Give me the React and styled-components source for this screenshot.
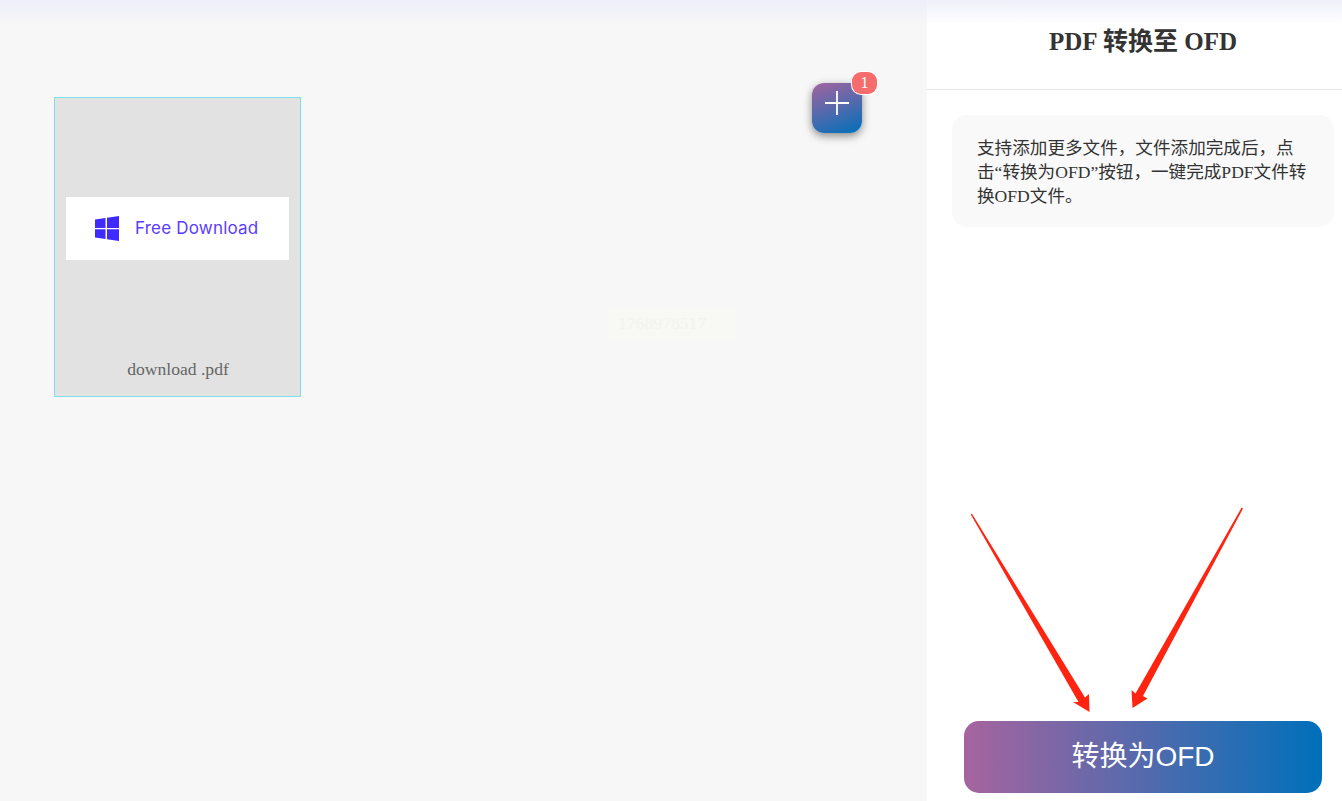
import React from 'react';
import styled, { createGlobalStyle } from 'styled-components';

const Global = createGlobalStyle`
  html, body { margin: 0; padding: 0; height: 100%; }
  body { font-family: "Liberation Serif", "Noto Sans CJK SC", serif; overflow: hidden; }
  #root { height: 100%; }
`;

const Page = styled.div`
  position: relative;
  display: flex;
  width: 1342px;
  height: 801px;
  overflow: hidden;
  background: #fff;
`;

const TopGlow = styled.div`
  position: absolute;
  inset: 0 0 auto 0;
  height: 24px;
  background: linear-gradient(180deg, rgba(236, 236, 250, 0.85), rgba(245, 245, 252, 0));
  pointer-events: none;
`;

const Workspace = styled.main`
  position: relative;
  flex: 0 0 927px;
  box-sizing: border-box;
  padding: 97px 0 0 54px;
  background: #f7f7f7;
`;

const FileCard = styled.div`
  box-sizing: border-box;
  width: 247px;
  height: 300px;
  border: 1px solid #7ddfe9;
  background: #e2e2e2;
  display: flex;
  flex-direction: column;
  align-items: center;
  padding: 99px 11px 0;
`;

const Thumb = styled.div`
  width: 223px;
  height: 63px;
  flex: none;
  box-sizing: border-box;
  background: #fff;
  display: flex;
  align-items: center;
  gap: 16px;
  padding: 0 0 1px 29px;
`;

const ThumbLabel = styled.span`
  font-family: "Inter", "Liberation Sans", sans-serif;
  font-size: 17px;
  letter-spacing: 0.2px;
  color: #5a3dff;
  white-space: nowrap;
`;

const FileName = styled.div`
  margin-top: 99px;
  padding-left: 1px;
  font-size: 17.6px;
  line-height: 20px;
  color: #666;
`;

const AddButton = styled.button`
  position: absolute;
  left: 812px;
  top: 83px;
  width: 50px;
  height: 50px;
  padding: 0 0 10px;
  border: none;
  border-radius: 12px;
  background: linear-gradient(160deg, #a4639f 0%, #0070ba 100%);
  box-shadow: 0 3px 8px rgba(0, 0, 0, 0.45);
  display: flex;
  align-items: center;
  justify-content: center;
`;

const Badge = styled.span`
  position: absolute;
  right: -15px;
  top: -11px;
  width: 25px;
  height: 22px;
  border-radius: 9px;
  background: #f56c6c;
  box-shadow: 0 0 0 1px #fff;
  color: #fff;
  font-family: "Liberation Serif", serif;
  font-size: 16px;
  line-height: 22px;
  text-align: center;
`;

const Watermark = styled.div`
  position: absolute;
  left: 608px;
  top: 306px;
  width: 129px;
  height: 33px;
  box-sizing: border-box;
  padding-left: 10px;
  background: #f8f8f5;
  border-radius: 4px;
  color: #f3f3ee;
  font-size: 17.6px;
  line-height: 34px;
`;

const Sidebar = styled.aside`
  position: relative;
  flex: 1;
  display: flex;
  flex-direction: column;
  background: transparent;
`;

const SideHeader = styled.header`
  flex: none;
  height: 90px;
  box-sizing: border-box;
  padding: 0 0 12px 17px;
  border-bottom: 1px solid #e6e6e6;
  display: flex;
  align-items: center;
  justify-content: center;
`;

const Title = styled.h1`
  margin: 0;
  font-size: 25px;
  font-weight: 700;
  color: #333;
`;

const Notice = styled.p`
  margin: 25px 8px 0 25px;
  padding: 21px 25px 0;
  height: 112px;
  box-sizing: border-box;
  border-radius: 15px;
  background: #f9f9f9;
  font-size: 17.6px;
  line-height: 24px;
  color: #333;
`;

const Convert = styled.button`
  margin: auto 20px 8px 37px;
  height: 72px;
  padding: 0 0 6px;
  border: none;
  border-radius: 15px;
  background: linear-gradient(90deg, #a7649f 0%, #0070ba 100%);
  color: #fff;
  font-family: "Liberation Sans", "Noto Sans CJK SC", sans-serif;
  font-size: 28px;
`;

const ArrowLayer = styled.svg`
  position: absolute;
  left: 0;
  top: 500px;
  pointer-events: none;
`;

const WindowsLogo = () => (
  <svg width="24" height="25" viewBox="0 0 24 25" aria-hidden="true">
    <path fill="#3f2bff" d="M0 3.6 10.5 2v10H0zM12 1.8 24 0v12H12zM0 13.2h10.5V23L0 21.4zM12 13.2h12V25l-12-1.8z" />
  </svg>
);

const Plus = () => (
  <svg width="24" height="24" viewBox="0 0 24 24" aria-hidden="true">
    <path stroke="#fff" strokeWidth="1.8" d="M12 0v24M0 12h24" />
  </svg>
);

export default function App() {
  return (
    <Page>
      <Global />
      <Workspace>
        <FileCard>
          <Thumb>
            <WindowsLogo />
            <ThumbLabel>Free Download</ThumbLabel>
          </Thumb>
          <FileName>download .pdf</FileName>
        </FileCard>
        <Watermark>1768978517</Watermark>
        <AddButton aria-label="add">
          <Plus />
          <Badge>1</Badge>
        </AddButton>
      </Workspace>
      <Sidebar>
        <SideHeader>
          <Title>PDF 转换至 OFD</Title>
        </SideHeader>
        <Notice>支持添加更多文件，文件添加完成后，点击“转换为OFD”按钮，一键完成PDF文件转换OFD文件。</Notice>
        <Convert>转换为OFD</Convert>
        <ArrowLayer width="415" height="220" viewBox="927 500 415 220">
          <polygon fill="#ff2410" points="971.8,513.6 1085,697.5 1089,694 1089.5,712 1073,702 1078.5,702 970.8,514.6" />
          <polygon fill="#ff2410" points="1241.6,507.6 1135.5,693.5 1131.5,690 1132.5,708 1147.5,698.5 1143,696 1243,508.4" />
        </ArrowLayer>
      </Sidebar>
      <TopGlow />
    </Page>
  );
}
